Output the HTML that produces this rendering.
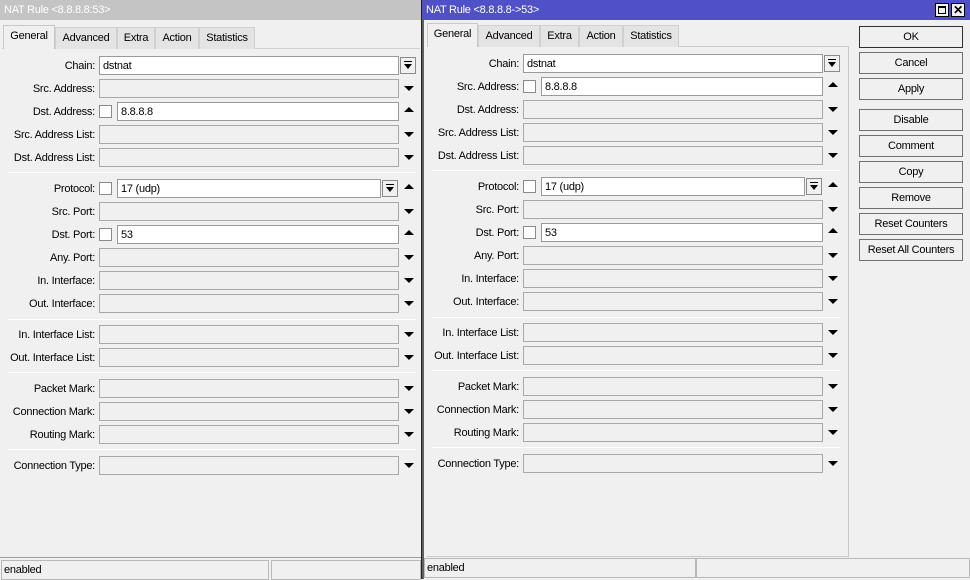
<!DOCTYPE html>
<html><head><meta charset="utf-8"><style>
*{box-sizing:border-box;margin:0;padding:0}
body{width:970px;height:579px;overflow:hidden;background:#f0f0f0;font-family:"Liberation Sans",sans-serif;font-size:11px;color:#000;position:relative;letter-spacing:-0.25px}
.a{position:absolute}
.tb{position:absolute;top:0;height:20px;font-size:11px;line-height:21px;padding-left:4px}
.tab{position:absolute;height:22px;border:1px solid #d0d0d0;border-bottom:none;background:#e4e4e4;text-align:center;line-height:21px;font-size:11px}
.tab.s{background:#f0f0f0;border-color:#c8c8c8;height:24px}
.l{position:absolute;width:95px;text-align:right;line-height:20px;height:19px;font-size:11px;white-space:nowrap}
.f{position:absolute;height:19px;border:1px solid #a8a8a8;background:#f0f0f0;line-height:18px;padding-left:3px;font-size:11px}
.f.w{background:#fff;border-color:#9a9a9a}
.cb{position:absolute;width:13px;height:13px;border:1px solid #8a8a8a;background:#fff}
.dn{position:absolute;width:0;height:0;border-left:5px solid transparent;border-right:5px solid transparent;border-top:5px solid #000}
.up{position:absolute;width:0;height:0;border-left:5px solid transparent;border-right:5px solid transparent;border-bottom:5px solid #000}
.dd{position:absolute;width:16px;height:17px;border:1px solid #8a8a8a;background:#f0f0f0}
.dd:before{content:"";position:absolute;left:3px;top:3px;width:8px;height:1px;background:#000}
.dd:after{content:"";position:absolute;left:3px;top:6px;border-left:4px solid transparent;border-right:4px solid transparent;border-top:5px solid #000}
.sep{position:absolute;height:1px;background:#c8c8c8;border-bottom:1px solid #fff}
.btn{position:absolute;left:859px;width:104px;height:22px;border:1px solid #707070;background:#f0f0f0;text-align:center;line-height:21px;font-size:11px}
.st{position:absolute;height:20px;border:1px solid #b8b8b8;font-size:11px;line-height:19px;padding-left:2px}
</style></head><body>

<!-- LEFT WINDOW -->
<div class="tb" style="left:0;width:421px;background:#c4c4c4;color:#fff">NAT Rule &lt;8.8.8.8:53&gt;</div>
<div class="a" style="left:421px;top:0;width:1px;height:579px;background:#202020"></div>
<div class="a" style="left:2px;top:48px;width:418px;height:1px;background:#d0d0d0"></div>
<div class="tab s" style="left:3px;top:25px;width:52px">General</div>
<div class="tab" style="left:55px;top:27px;width:62px">Advanced</div>
<div class="tab" style="left:117px;top:27px;width:38px">Extra</div>
<div class="tab" style="left:155px;top:27px;width:44px">Action</div>
<div class="tab" style="left:199px;top:27px;width:56px">Statistics</div>

<div class="l" style="left:0;top:56px">Chain:</div><div class="f w" style="left:99px;top:56px;width:300px">dstnat</div><div class="dd" style="left:400px;top:57px"></div>
<div class="l" style="left:0;top:79px">Src. Address:</div><div class="f" style="left:99px;top:79px;width:300px"></div><div class="dn" style="left:404px;top:86px"></div>
<div class="l" style="left:0;top:102px">Dst. Address:</div><div class="cb" style="left:99px;top:105px"></div><div class="f w" style="left:117px;top:102px;width:282px">8.8.8.8</div><div class="up" style="left:404px;top:107px"></div>
<div class="l" style="left:0;top:125px">Src. Address List:</div><div class="f" style="left:99px;top:125px;width:300px"></div><div class="dn" style="left:404px;top:132px"></div>
<div class="l" style="left:0;top:148px">Dst. Address List:</div><div class="f" style="left:99px;top:148px;width:300px"></div><div class="dn" style="left:404px;top:155px"></div>
<div class="sep" style="left:8px;top:172px;width:408px"></div>
<div class="l" style="left:0;top:179px">Protocol:</div><div class="cb" style="left:99px;top:182px"></div><div class="f w" style="left:117px;top:179px;width:264px">17 (udp)</div><div class="dd" style="left:382px;top:180px"></div><div class="up" style="left:404px;top:184px"></div>
<div class="l" style="left:0;top:202px">Src. Port:</div><div class="f" style="left:99px;top:202px;width:300px"></div><div class="dn" style="left:404px;top:209px"></div>
<div class="l" style="left:0;top:225px">Dst. Port:</div><div class="cb" style="left:99px;top:228px"></div><div class="f w" style="left:117px;top:225px;width:282px">53</div><div class="up" style="left:404px;top:230px"></div>
<div class="l" style="left:0;top:248px">Any. Port:</div><div class="f" style="left:99px;top:248px;width:300px"></div><div class="dn" style="left:404px;top:255px"></div>
<div class="l" style="left:0;top:271px">In. Interface:</div><div class="f" style="left:99px;top:271px;width:300px"></div><div class="dn" style="left:404px;top:278px"></div>
<div class="l" style="left:0;top:294px">Out. Interface:</div><div class="f" style="left:99px;top:294px;width:300px"></div><div class="dn" style="left:404px;top:301px"></div>
<div class="sep" style="left:8px;top:319px;width:408px"></div>
<div class="l" style="left:0;top:325px">In. Interface List:</div><div class="f" style="left:99px;top:325px;width:300px"></div><div class="dn" style="left:404px;top:332px"></div>
<div class="l" style="left:0;top:348px">Out. Interface List:</div><div class="f" style="left:99px;top:348px;width:300px"></div><div class="dn" style="left:404px;top:355px"></div>
<div class="sep" style="left:8px;top:372px;width:408px"></div>
<div class="l" style="left:0;top:379px">Packet Mark:</div><div class="f" style="left:99px;top:379px;width:300px"></div><div class="dn" style="left:404px;top:386px"></div>
<div class="l" style="left:0;top:402px">Connection Mark:</div><div class="f" style="left:99px;top:402px;width:300px"></div><div class="dn" style="left:404px;top:409px"></div>
<div class="l" style="left:0;top:425px">Routing Mark:</div><div class="f" style="left:99px;top:425px;width:300px"></div><div class="dn" style="left:404px;top:432px"></div>
<div class="sep" style="left:8px;top:449px;width:408px"></div>
<div class="l" style="left:0;top:456px">Connection Type:</div><div class="f" style="left:99px;top:456px;width:300px"></div><div class="dn" style="left:404px;top:463px"></div>
<div class="a" style="left:0;top:557px;width:421px;height:1px;background:#a0a0a0"></div>
<div class="st" style="left:1px;top:560px;width:268px">enabled</div>
<div class="st" style="left:271px;top:560px;width:150px"></div>

<!-- RIGHT WINDOW -->
<div class="tb" style="left:422px;width:548px;background:#5050c8;color:#fff">NAT Rule &lt;8.8.8.8-&gt;53&gt;</div>
<div class="a" style="left:935px;top:3px;width:14px;height:14px;background:#f0f0f0;border:1px solid #000"><div class="a" style="left:2px;top:2px;width:8px;height:8px;border:1px solid #000;border-top-width:2px"></div></div>
<div class="a" style="left:951px;top:3px;width:14px;height:14px;background:#f0f0f0;border:1px solid #000;font-size:12px;line-height:12px;text-align:center;font-weight:bold">✕</div>
<div class="a" style="left:422px;top:20px;width:2px;height:559px;background:#606060"></div>
<div class="a" style="left:427px;top:46px;width:422px;height:511px;border:1px solid #c8c8c8;border-left:none"></div>
<div class="tab s" style="left:427px;top:23px;width:51px">General</div>
<div class="tab" style="left:478px;top:25px;width:62px">Advanced</div>
<div class="tab" style="left:540px;top:25px;width:39px">Extra</div>
<div class="tab" style="left:579px;top:25px;width:44px">Action</div>
<div class="tab" style="left:623px;top:25px;width:56px">Statistics</div>

<div class="l" style="left:424px;top:54px">Chain:</div><div class="f w" style="left:523px;top:54px;width:300px">dstnat</div><div class="dd" style="left:824px;top:55px"></div>
<div class="l" style="left:424px;top:77px">Src. Address:</div><div class="cb" style="left:523px;top:80px"></div><div class="f w" style="left:541px;top:77px;width:282px">8.8.8.8</div><div class="up" style="left:828px;top:82px"></div>
<div class="l" style="left:424px;top:100px">Dst. Address:</div><div class="f" style="left:523px;top:100px;width:300px"></div><div class="dn" style="left:828px;top:107px"></div>
<div class="l" style="left:424px;top:123px">Src. Address List:</div><div class="f" style="left:523px;top:123px;width:300px"></div><div class="dn" style="left:828px;top:130px"></div>
<div class="l" style="left:424px;top:146px">Dst. Address List:</div><div class="f" style="left:523px;top:146px;width:300px"></div><div class="dn" style="left:828px;top:153px"></div>
<div class="sep" style="left:432px;top:170px;width:408px"></div>
<div class="l" style="left:424px;top:177px">Protocol:</div><div class="cb" style="left:523px;top:180px"></div><div class="f w" style="left:541px;top:177px;width:264px">17 (udp)</div><div class="dd" style="left:806px;top:178px"></div><div class="up" style="left:828px;top:182px"></div>
<div class="l" style="left:424px;top:200px">Src. Port:</div><div class="f" style="left:523px;top:200px;width:300px"></div><div class="dn" style="left:828px;top:207px"></div>
<div class="l" style="left:424px;top:223px">Dst. Port:</div><div class="cb" style="left:523px;top:226px"></div><div class="f w" style="left:541px;top:223px;width:282px">53</div><div class="up" style="left:828px;top:228px"></div>
<div class="l" style="left:424px;top:246px">Any. Port:</div><div class="f" style="left:523px;top:246px;width:300px"></div><div class="dn" style="left:828px;top:253px"></div>
<div class="l" style="left:424px;top:269px">In. Interface:</div><div class="f" style="left:523px;top:269px;width:300px"></div><div class="dn" style="left:828px;top:276px"></div>
<div class="l" style="left:424px;top:292px">Out. Interface:</div><div class="f" style="left:523px;top:292px;width:300px"></div><div class="dn" style="left:828px;top:299px"></div>
<div class="sep" style="left:432px;top:317px;width:408px"></div>
<div class="l" style="left:424px;top:323px">In. Interface List:</div><div class="f" style="left:523px;top:323px;width:300px"></div><div class="dn" style="left:828px;top:330px"></div>
<div class="l" style="left:424px;top:346px">Out. Interface List:</div><div class="f" style="left:523px;top:346px;width:300px"></div><div class="dn" style="left:828px;top:353px"></div>
<div class="sep" style="left:432px;top:370px;width:408px"></div>
<div class="l" style="left:424px;top:377px">Packet Mark:</div><div class="f" style="left:523px;top:377px;width:300px"></div><div class="dn" style="left:828px;top:384px"></div>
<div class="l" style="left:424px;top:400px">Connection Mark:</div><div class="f" style="left:523px;top:400px;width:300px"></div><div class="dn" style="left:828px;top:407px"></div>
<div class="l" style="left:424px;top:423px">Routing Mark:</div><div class="f" style="left:523px;top:423px;width:300px"></div><div class="dn" style="left:828px;top:430px"></div>
<div class="sep" style="left:432px;top:447px;width:408px"></div>
<div class="l" style="left:424px;top:454px">Connection Type:</div><div class="f" style="left:523px;top:454px;width:300px"></div><div class="dn" style="left:828px;top:461px"></div>

<div class="btn" style="top:26px;border-color:#303030">OK</div>
<div class="btn" style="top:52px">Cancel</div>
<div class="btn" style="top:78px">Apply</div>
<div class="btn" style="top:109px">Disable</div>
<div class="btn" style="top:135px">Comment</div>
<div class="btn" style="top:161px">Copy</div>
<div class="btn" style="top:187px">Remove</div>
<div class="btn" style="top:213px">Reset Counters</div>
<div class="btn" style="top:239px">Reset All Counters</div>

<div class="st" style="left:424px;top:558px;width:272px">enabled</div>
<div class="st" style="left:696px;top:558px;width:274px"></div>
</body></html>
